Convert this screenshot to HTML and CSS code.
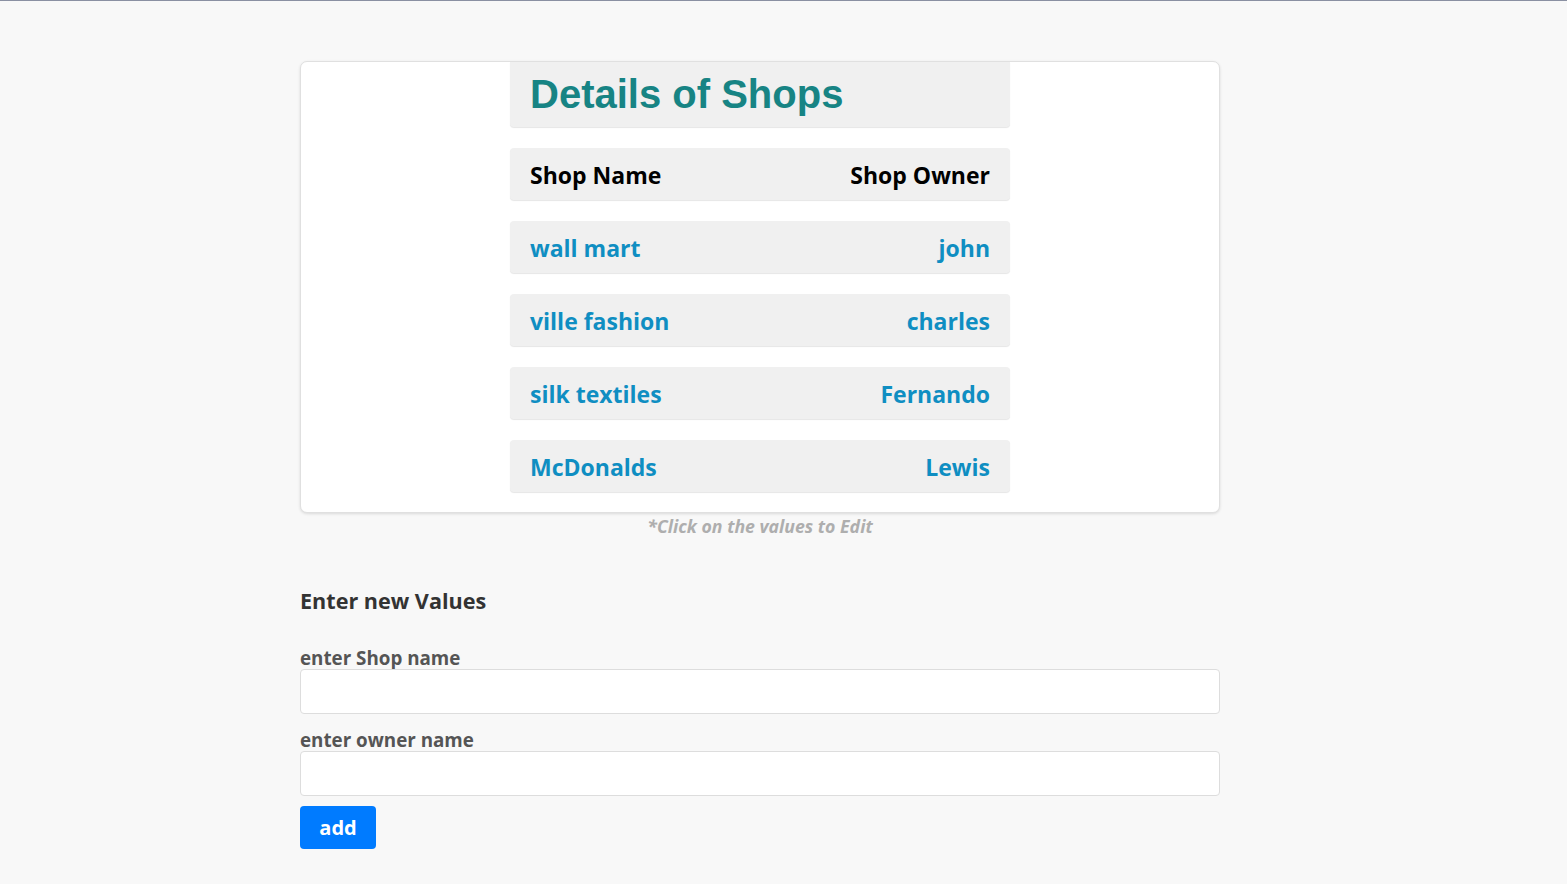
FILE: index.html
```html
<!DOCTYPE html>
<html>
<head>
<meta charset="utf-8">
<link rel="stylesheet" href="styles.css">
</head>
<body>
<div class="page">
  <div class="card">
    <div class="column">
      <div class="title-box"><h1 class="title">Details of Shops</h1></div>
      <div class="row head"><span>Shop Name</span><span>Shop Owner</span></div>
      <div class="row"><span>wall mart</span><span>john</span></div>
      <div class="row"><span>ville fashion</span><span>charles</span></div>
      <div class="row"><span>silk textiles</span><span>Fernando</span></div>
      <div class="row"><span>McDonalds</span><span>Lewis</span></div>
    </div>
  </div>
  <p class="hint">*Click on the values to Edit</p>
  <form class="form">
    <h3 class="form-title">Enter new Values</h3>
    <label class="label">enter Shop name</label>
    <input class="input first" type="text">
    <label class="label">enter owner name</label>
    <input class="input last" type="text">
    <button class="btn" type="button">add</button>
  </form>
</div>
</body>
</html>
```
FILE: styles.css
```css
html, body { margin: 0; padding: 0; }
body {
  background: #f8f8f8;
  border-top: 1px solid #8a90a2;
  font-family: "Open Sans", "Noto Sans", sans-serif;
  height: 883px;
  overflow: hidden;
}
.page {
  width: 920px;
  margin: 60px 0 0 300px;
}
.card {
  background: #fff;
  border: 1px solid #e0e0e0;
  border-radius: 7px;
  box-shadow: 0 1px 3px rgba(0,0,0,0.12);
  padding: 0 0 20px;
  display: flex;
  justify-content: center;
}
.column {
  width: 500px;
  display: flex;
  flex-direction: column;
  gap: 21px;
}
.title-box {
  background: #f0f0f0;
  border-radius: 0 0 4px 4px;
  box-shadow: 0 1px 1px rgba(0,0,0,0.1);
  height: 65px;
  padding: 0 20px;
  display: flex;
  align-items: center;
}
.title {
  margin: 0;
  font-family: "Liberation Sans", Arial, sans-serif;
  font-weight: bold;
  font-size: 40px;
  color: #178484;
}
.row {
  background: #f0f0f0;
  border-radius: 4px;
  box-shadow: 0 1px 1px rgba(0,0,0,0.1);
  height: 52px;
  padding: 0 20px;
  display: flex;
  justify-content: space-between;
  align-items: center;
  font-weight: bold;
  font-size: 23px;
  color: #0f8ec2;
}
.row span { position: relative; top: 1px; }
.row.head { color: #000; }
.hint {
  margin: 1px 0 0;
  text-align: center;
  font-style: italic;
  font-weight: bold;
  font-size: 17.7px;
  color: #aeaeae;
}
.form { margin-top: 48px; display: flex; flex-direction: column; align-items: flex-start; }
.form-title {
  margin: 0 0 32px;
  font-size: 21.6px;
  font-weight: bold;
  color: #333;
}
.label {
  font-size: 18.8px;
  font-weight: bold;
  color: #555;
  line-height: 22px;
}
.input {
  box-sizing: border-box;
  width: 920px;
  height: 45px;
  border: 1px solid #ddd;
  border-radius: 4px;
  background: #fff;
}
.input.first { margin-bottom: 15px; }
.input.last { margin-bottom: 10px; }
.btn {
  width: 76px;
  height: 43px;
  background: #007bff;
  color: #fff;
  border: none;
  border-radius: 4px;
  font-family: "Open Sans", "Noto Sans", sans-serif;
  font-weight: bold;
  font-size: 20px;
}
```
